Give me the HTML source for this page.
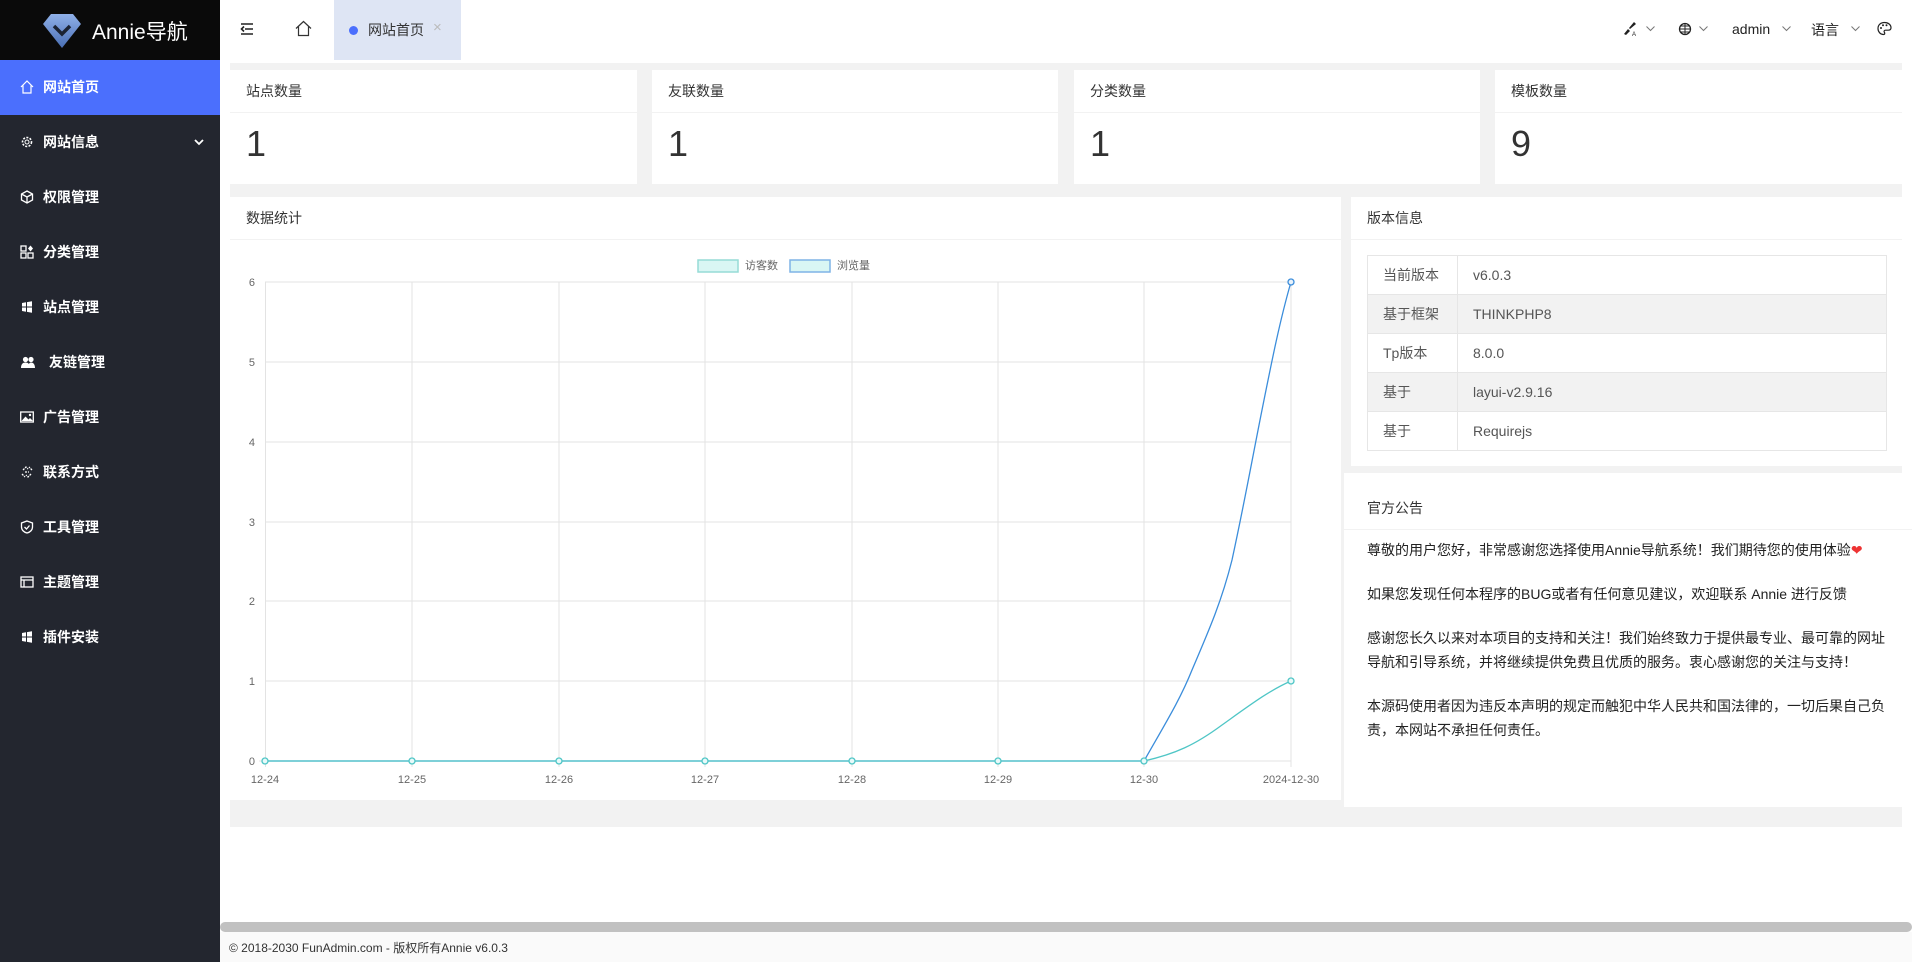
<!DOCTYPE html>
<html><head><meta charset="utf-8"><style>
*{margin:0;padding:0;box-sizing:border-box}
body{width:1912px;height:962px;position:relative;overflow:hidden;background:#fff;font-family:"Liberation Sans","Noto Sans CJK SC",sans-serif;font-size:14px;color:#333}
.a{position:absolute}
#logo{left:0;top:0;width:220px;height:60px;background:#0a0a0a;color:#fff;font-size:21px}
#side{left:0;top:60px;width:220px;height:902px;background:#23262f}
.mi{position:absolute;left:0;width:220px;height:55px;color:#fff;font-weight:bold;font-size:14px;line-height:55px;padding-left:43px}
.mi .ic{position:absolute;left:20px;top:20px;width:14px;height:14px}
.card{position:absolute;background:#fff}
.card .h{height:43px;line-height:43px;padding-left:16px;border-bottom:1px solid #f2f2f2;font-size:14px;color:#333}
.num{font-size:36px;color:#333;padding:10px 0 0 16px;font-family:"Liberation Sans",sans-serif}
table{border-collapse:collapse;position:absolute;left:16px;top:58px;width:520px;font-size:14px;color:#555}
td{border:1px solid #e6e6e6;height:39px;padding-left:15px}
tr:nth-child(even) td{background:#f2f2f2}
</style></head><body>
<div class="a" id="logo">
<svg class="a" style="left:42px;top:13px" width="40" height="36" viewBox="0 0 40 36"><defs><linearGradient id="g" x1="0" y1="0" x2="0" y2="1"><stop offset="0" stop-color="#8fb0e8"/><stop offset="1" stop-color="#4a6fb5"/></linearGradient></defs><path d="M9 1h22l8 10-19 24L1 11z" fill="url(#g)"/><path d="M12 13l8 8 8-8" fill="none" stroke="#1b2333" stroke-width="3.5"/></svg>
<span class="a" style="left:92px;top:16px">Annie导航</span></div>
<div class="a" id="side">
<div class="mi" style="top:0;background:#4b6ffd"><svg class="ic" viewBox="0 0 14 14"><path d="M1 7L7 1l6 6M3 5.5V13h8V5.5" fill="none" stroke="#fff" stroke-width="1.2"/></svg>网站首页</div>
<div class="mi" style="top:55px"><svg class="ic" viewBox="0 0 14 14"><circle cx="7" cy="7" r="4.5" fill="none" stroke="#fff" stroke-width="1.6" stroke-dasharray="2 1.4"/><circle cx="7" cy="7" r="2" fill="none" stroke="#fff"/></svg>网站信息<svg class="a" style="left:194px;top:24px" width="10" height="7" viewBox="0 0 10 7"><path d="M1 1l4 4 4-4" fill="none" stroke="#fff" stroke-width="1.8"/></svg></div>
<div class="mi" style="top:110px"><svg class="ic" viewBox="0 0 14 14"><path d="M7 1l5.5 3v6L7 13 1.5 10V4zM1.5 4L7 7l5.5-3M7 7v6" fill="none" stroke="#fff" stroke-width="1.3"/></svg>权限管理</div>
<div class="mi" style="top:165px"><svg class="ic" viewBox="0 0 14 14"><rect x="1" y="1" width="5" height="5" fill="none" stroke="#fff" stroke-width="1.3"/><rect x="1" y="8" width="5" height="5" fill="none" stroke="#fff" stroke-width="1.3"/><rect x="8" y="8" width="5" height="5" fill="none" stroke="#fff" stroke-width="1.3"/><path d="M10.5 0.5l2.5 3-2.5 3-2.5-3z" fill="#fff"/></svg>分类管理</div>
<div class="mi" style="top:220px"><svg class="ic" viewBox="0 0 14 14"><path d="M2 3l4-.7V6.5H2zM7 2.1l5-.9v5.3H7zM2 7.5h4v4.2l-4-.7zM7 7.5h5v5.3l-5-.9z" fill="#fff"/></svg>站点管理</div>
<div class="mi" style="top:275px;padding-left:49px"><svg class="ic" viewBox="0 0 14 14" style="width:16px"><circle cx="4.5" cy="4.5" r="2.6" fill="#fff"/><circle cx="10" cy="4.5" r="2.6" fill="#fff"/><path d="M0 13c0-4 2-5.5 4.5-5.5S9 9 9 13zM7 13c0-3 1-5.5 3-5.5s4 1.5 4 5.5z" fill="#fff"/></svg>友链管理</div>
<div class="mi" style="top:330px"><svg class="ic" viewBox="0 0 14 14"><rect x="0.7" y="2" width="12.6" height="10" fill="none" stroke="#fff" stroke-width="1.3"/><path d="M1.5 11l4-4.5 3 3 1.5-1.5 3 3z" fill="#fff"/><circle cx="10" cy="5" r="1.2" fill="#fff"/></svg>广告管理</div>
<div class="mi" style="top:385px"><svg class="ic" viewBox="0 0 14 14"><path d="M3 5l3-3 2 2M11 9l-3 3-2-2M2 9l3 3M12 5L9 2M5 7l4 0" fill="none" stroke="#fff" stroke-width="1.3" stroke-dasharray="2 1"/></svg>联系方式</div>
<div class="mi" style="top:440px"><svg class="ic" viewBox="0 0 14 14"><path d="M7 1l5.5 2v4c0 3-2.5 5.3-5.5 6-3-.7-5.5-3-5.5-6V3z" fill="none" stroke="#fff" stroke-width="1.3"/><path d="M4.5 7l2 2 3-3.5" fill="none" stroke="#fff" stroke-width="1.3"/></svg>工具管理</div>
<div class="mi" style="top:495px"><svg class="ic" viewBox="0 0 14 14"><rect x="1" y="2" width="12" height="10" fill="none" stroke="#fff" stroke-width="1.3"/><path d="M1 5h12M4 5v7" stroke="#fff" stroke-width="1.3"/></svg>主题管理</div>
<div class="mi" style="top:550px"><svg class="ic" viewBox="0 0 14 14"><path d="M2 3l4-.7V6.5H2zM7 2.1l5-.9v5.3H7zM2 7.5h4v4.2l-4-.7zM7 7.5h5v5.3l-5-.9z" fill="#fff"/></svg>插件安装</div>
</div>
<!-- header -->
<svg class="a" style="left:240px;top:22px" width="14" height="14" viewBox="0 0 14 14"><path d="M1 2h12M5 7h8M1 12h12M4 4.5L1.5 7 4 9.5" fill="none" stroke="#222" stroke-width="1.6"/></svg>
<svg class="a" style="left:295px;top:20px" width="17" height="17" viewBox="0 0 17 17"><path d="M1 8.5L8.5 1.5 16 8.5M3.5 6.5V15.5h10V6.5" fill="none" stroke="#333" stroke-width="1.2"/></svg>
<div class="a" style="left:334px;top:0;width:127px;height:60px;background:#dee5f4"></div>
<div class="a" style="left:349px;top:26px;width:9px;height:9px;border-radius:50%;background:#4b6ffd"></div>
<div class="a" style="left:368px;top:20px;font-size:14px;color:#333">网站首页</div>
<div class="a" style="left:433px;top:19px;font-size:15px;color:#bbb">×</div>
<svg class="a" style="left:1622px;top:20px" width="16" height="16" viewBox="0 0 16 16"><path d="M2 14l4-5 2 2-4 4z" fill="#222"/><path d="M7 8l5-6 2 2-6 5z" fill="#222"/><text x="10" y="16" font-size="6" fill="#222" font-family="Liberation Sans">A</text></svg>
<svg class="a" style="left:1646px;top:26px" width="9" height="6" viewBox="0 0 9 6"><path d="M.5 .5l4 4 4-4" fill="none" stroke="#777"/></svg>
<svg class="a" style="left:1678px;top:22px" width="14" height="14" viewBox="0 0 14 14"><circle cx="7" cy="7" r="5.5" fill="none" stroke="#222" stroke-width="1.3"/><path d="M1.5 7h11M7 1.5v11M3 4h8M3 10h8" stroke="#222" stroke-width="1"/></svg>
<svg class="a" style="left:1699px;top:26px" width="9" height="6" viewBox="0 0 9 6"><path d="M.5 .5l4 4 4-4" fill="none" stroke="#777"/></svg>
<div class="a" style="left:1732px;top:21px;font-size:14px;color:#222">admin</div>
<svg class="a" style="left:1782px;top:26px" width="9" height="6" viewBox="0 0 9 6"><path d="M.5 .5l4 4 4-4" fill="none" stroke="#777"/></svg>
<div class="a" style="left:1811px;top:20px;font-size:14px;color:#222">语言</div>
<svg class="a" style="left:1851px;top:26px" width="9" height="6" viewBox="0 0 9 6"><path d="M.5 .5l4 4 4-4" fill="none" stroke="#777"/></svg>
<svg class="a" style="left:1877px;top:21px" width="15" height="15" viewBox="0 0 15 15"><path d="M7.5 1.5C3.5 1.5 1 4 1 7.5S3.5 13.5 6.5 13.5c1.5 0 1.5-1.5 .8-2.3-.7-.8 0-2 1.2-2h2.5c2 0 3-1 3-2.5 0-3-2.8-5.2-6.5-5.2z" fill="none" stroke="#222" stroke-width="1.2"/><circle cx="4" cy="7" r="1" fill="#222"/><circle cx="6" cy="4.3" r="1" fill="#222"/><circle cx="9.5" cy="4.3" r="1" fill="#222"/></svg>
<!-- content -->
<div class="a" style="left:230px;top:63px;width:1672px;height:764px;background:#f2f2f2"></div>
<div class="card" style="left:230px;top:70px;width:407px;height:114px"><div class="h">站点数量</div><div class="num">1</div></div>
<div class="card" style="left:652px;top:70px;width:406px;height:114px"><div class="h">友联数量</div><div class="num">1</div></div>
<div class="card" style="left:1074px;top:70px;width:406px;height:114px"><div class="h">分类数量</div><div class="num">1</div></div>
<div class="card" style="left:1495px;top:70px;width:407px;height:114px"><div class="h">模板数量</div><div class="num">9</div></div>
<div class="card" style="left:230px;top:197px;width:1111px;height:603px"><div class="h">数据统计</div></div>
<svg class="a" style="left:0;top:0" width="1912" height="962">
<g stroke="#e3e3e3" stroke-width="1">
<line x1="265" y1="282" x2="1291" y2="282"/><line x1="265" y1="362" x2="1291" y2="362"/><line x1="265" y1="442" x2="1291" y2="442"/><line x1="265" y1="522" x2="1291" y2="522"/><line x1="265" y1="601" x2="1291" y2="601"/><line x1="265" y1="681" x2="1291" y2="681"/><line x1="259" y1="761" x2="1291" y2="761"/>
<line x1="265.5" y1="282" x2="265.5" y2="767"/><line x1="412" y1="282" x2="412" y2="767"/><line x1="559" y1="282" x2="559" y2="767"/><line x1="705" y1="282" x2="705" y2="767"/><line x1="852" y1="282" x2="852" y2="767"/><line x1="998" y1="282" x2="998" y2="767"/><line x1="1144" y1="282" x2="1144" y2="767"/><line x1="1291" y1="282" x2="1291" y2="767"/>
</g>
<g font-size="11" fill="#666" font-family="Liberation Sans" text-anchor="end">
<text x="255" y="286">6</text><text x="255" y="366">5</text><text x="255" y="446">4</text><text x="255" y="526">3</text><text x="255" y="605">2</text><text x="255" y="685">1</text><text x="255" y="765">0</text></g>
<g font-size="11" fill="#666" font-family="Liberation Sans" text-anchor="middle">
<text x="265" y="783">12-24</text><text x="412" y="783">12-25</text><text x="559" y="783">12-26</text><text x="705" y="783">12-27</text><text x="852" y="783">12-28</text><text x="998" y="783">12-29</text><text x="1144" y="783">12-30</text><text x="1291" y="783">2024-12-30</text></g>
<rect x="698" y="260" width="40" height="12" fill="#d9f6f4" stroke="#96dcd6" stroke-width="1.5"/>
<text x="745" y="269" font-size="11" fill="#666" font-family="Noto Sans CJK SC">访客数</text>
<rect x="790" y="260" width="40" height="12" fill="#d9f6f4" stroke="#7fb3e6" stroke-width="1.5"/>
<text x="837" y="269" font-size="11" fill="#666" font-family="Noto Sans CJK SC">浏览量</text>
<path d="M265 761H1144C1165 724 1180 700 1192 670C1210 628 1222 600 1232 560C1245 500 1252 460 1262 410C1272 360 1280 320 1291 282" fill="none" stroke="#3b8ddb" stroke-width="1.3"/>
<path d="M265 761H1144C1175 754 1195 745 1222 725C1250 705 1270 690 1291 681" fill="none" stroke="#4fc6c6" stroke-width="1.3"/>
<g fill="#e8fafa" stroke="#4fc6c6" stroke-width="1.3"><circle cx="265" cy="761" r="3"/><circle cx="412" cy="761" r="3"/><circle cx="559" cy="761" r="3"/><circle cx="705" cy="761" r="3"/><circle cx="852" cy="761" r="3"/><circle cx="998" cy="761" r="3"/><circle cx="1144" cy="761" r="3"/><circle cx="1291" cy="681" r="3"/></g>
<circle cx="1291" cy="282" r="3" fill="#e8f2fb" stroke="#3b8ddb" stroke-width="1.3"/>
</svg>
<div class="card" style="left:1351px;top:197px;width:551px;height:269px"><div class="h">版本信息</div>
<table><tr><td style="width:90px">当前版本</td><td>v6.0.3</td></tr><tr><td>基于框架</td><td>THINKPHP8</td></tr><tr><td>Tp版本</td><td>8.0.0</td></tr><tr><td>基于</td><td>layui-v2.9.16</td></tr><tr><td>基于</td><td>Requirejs</td></tr></table></div>
<div class="card" style="left:1344px;top:473px;width:568px;height:334px">
<div class="h" style="height:57px;line-height:70px;padding-left:23px">官方公告</div>
<div style="padding:8px 0 0 23px;font-size:14px;color:#222;line-height:24px">
<p style="margin-bottom:20px">尊敬的用户您好，非常感谢您选择使用Annie导航系统！我们期待您的使用体验<span style="color:#e33">❤</span></p>
<p style="margin-bottom:20px">如果您发现任何本程序的BUG或者有任何意见建议，欢迎联系 Annie 进行反馈</p>
<p style="margin-bottom:20px">感谢您长久以来对本项目的支持和关注！我们始终致力于提供最专业、最可靠的网址<br>导航和引导系统，并将继续提供免费且优质的服务。衷心感谢您的关注与支持！</p>
<p>本源码使用者因为违反本声明的规定而触犯中华人民共和国法律的，一切后果自己负<br>责，本网站不承担任何责任。</p>
</div></div>
<div class="a" style="left:220px;top:922px;width:1692px;height:10px;background:#c1c1c1;border-radius:5px"></div>
<div class="a" style="left:220px;top:932px;width:1692px;height:30px;background:#fafafa"></div>
<div class="a" style="left:229px;top:939px;font-size:12px;color:#333">© 2018-2030 FunAdmin.com - 版权所有Annie v6.0.3</div>
</body></html>
